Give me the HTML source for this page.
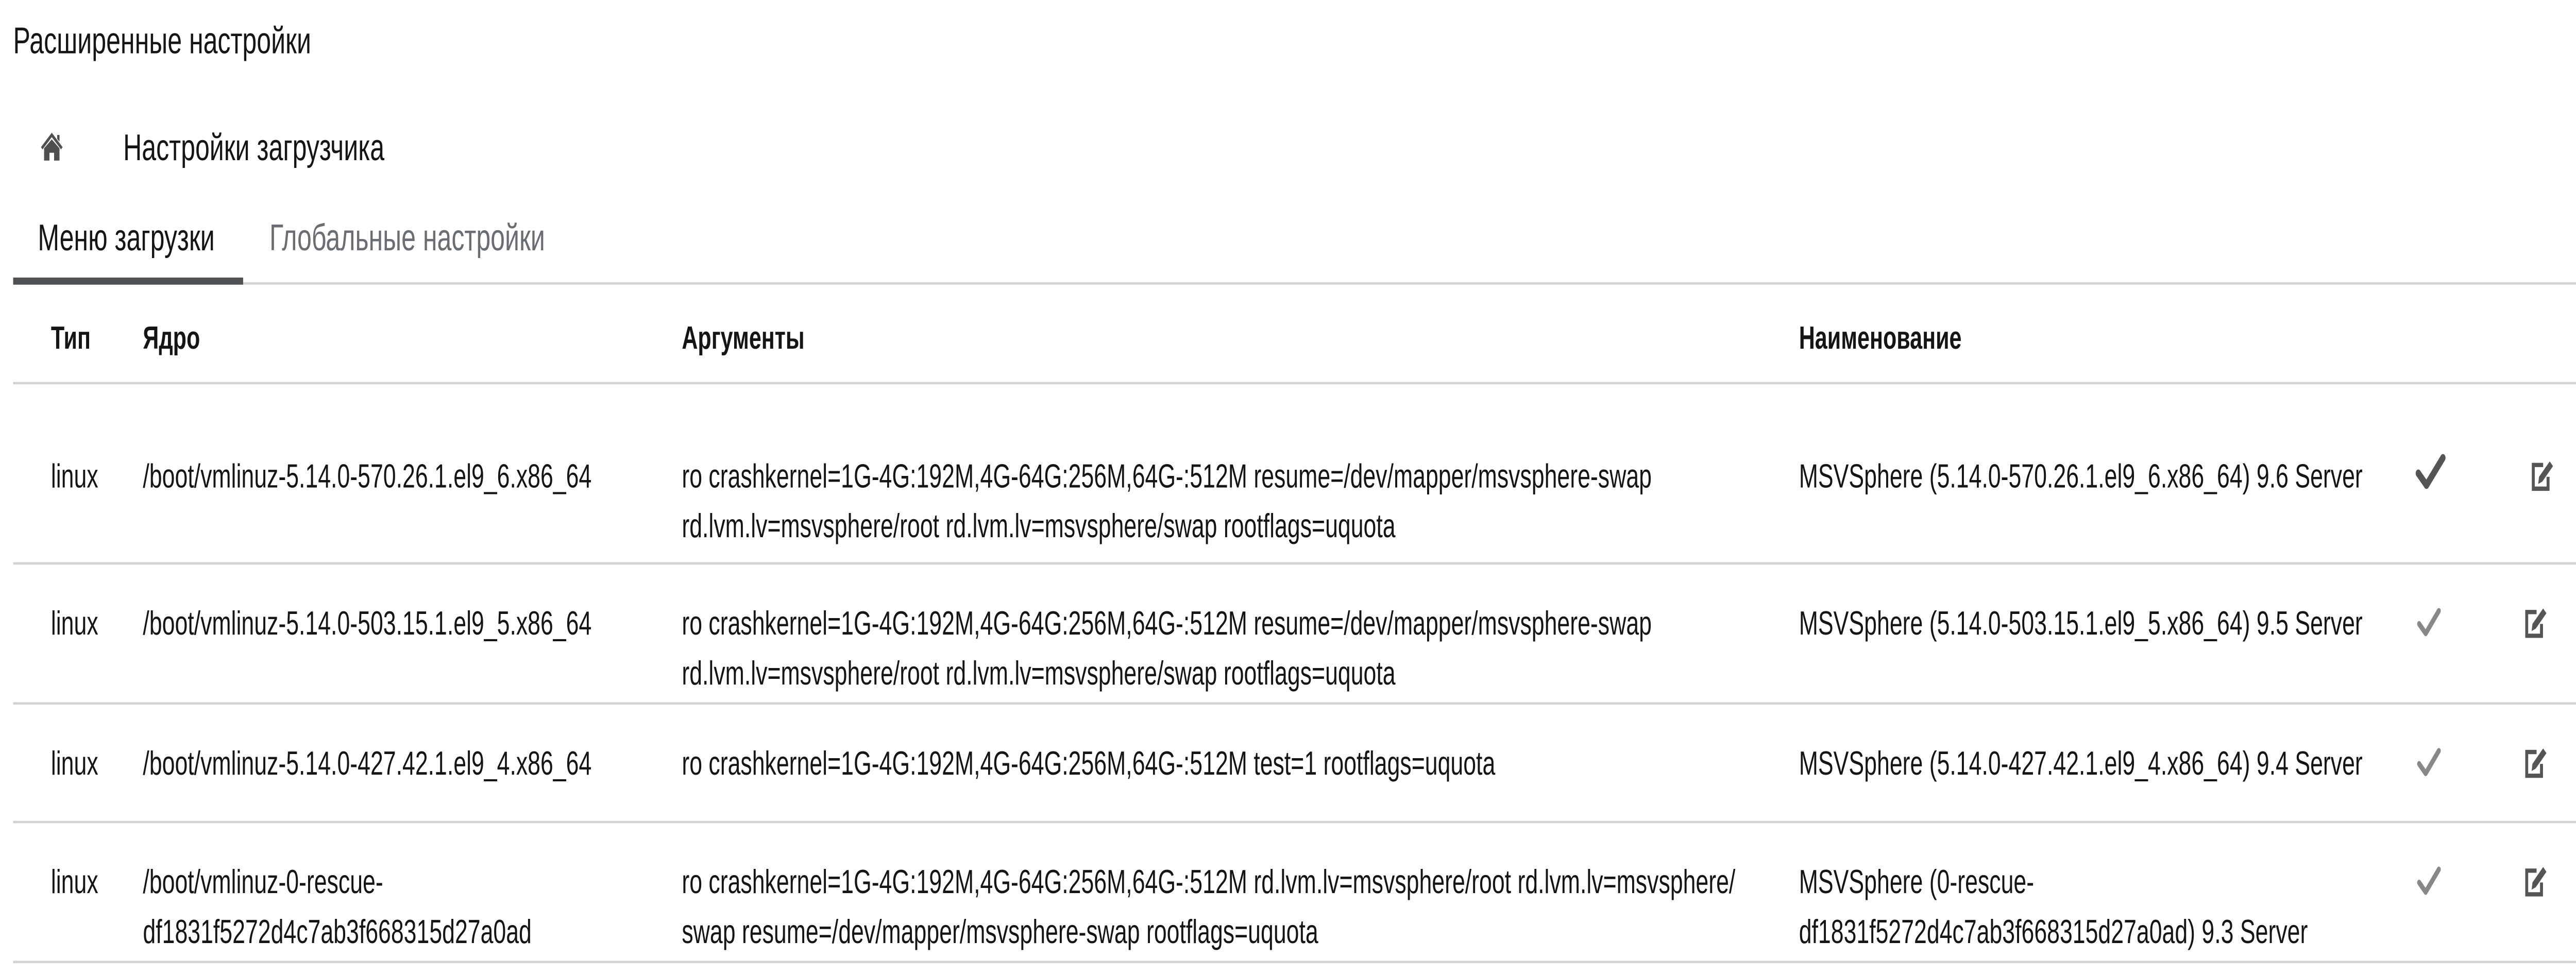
<!DOCTYPE html>
<html><head><meta charset="utf-8"><style>
html,body{margin:0;padding:0;background:#fff;width:100%;height:100%;overflow:hidden}
svg.m{position:absolute;left:0;top:0;width:100vw;height:100vh;display:block}
text{font-family:"Liberation Sans","DejaVu Sans",sans-serif;fill:#151515;white-space:pre}
.t{font-size:14px}.h{font-size:13.5px;font-weight:bold}.b{font-size:15.7px}
</style></head><body>
<svg class="m" viewBox="0 0 1568 411" preserveAspectRatio="none">
<text class="b" x="8" y="22.5">Расширенные настройки</text>
<path transform="translate(24,55) scale(0.94)" d="M8 1 L1 7.5 L2 8.5 L8 3 L14 8.5 L15 7.5 Z M3 8 L8 4 L13 8 V13.5 H9.5 V10 H6.5 V13.5 H3 Z M11.5 2 H13 V5 L11.5 3.8Z" fill="#4f4f4f"/>
<text class="b" x="75" y="67.5">Настройки загрузчика</text>
<text class="b" x="23" y="105.5">Меню загрузки</text>
<text class="b" x="164" y="105.5" style="fill:#6a6e73">Глобальные настройки</text>
<rect x="8" y="119" width="1560" height="1" fill="#d2d2d2"/>
<rect x="8" y="117" width="140" height="3" fill="#4f5255"/>
<text class="h" x="31" y="147">Тип</text>
<text class="h" x="87" y="147">Ядро</text>
<text class="h" x="415" y="147">Аргументы</text>
<text class="h" x="1095" y="147">Наименование</text>
<rect x="8" y="161" width="1560" height="1" fill="#d2d2d2"/>

<text class="t" x="31" y="205.5">linux</text>
<text class="t" x="87" y="205.5">/boot/vmlinuz-5.14.0-570.26.1.el9_6.x86_64</text>
<text class="t" x="415" y="205.5">ro crashkernel=1G-4G:192M,4G-64G:256M,64G-:512M resume=/dev/mapper/msvsphere-swap</text>
<text class="t" x="415" y="226.5">rd.lvm.lv=msvsphere/root rd.lvm.lv=msvsphere/swap rootflags=uquota</text>
<text class="t" x="1095" y="205.5">MSVSphere (5.14.0-570.26.1.el9_6.x86_64) 9.6 Server</text>
<rect x="8" y="237" width="1560" height="1" fill="#d2d2d2"/>

<text class="t" x="31" y="267.5">linux</text>
<text class="t" x="87" y="267.5">/boot/vmlinuz-5.14.0-503.15.1.el9_5.x86_64</text>
<text class="t" x="415" y="267.5">ro crashkernel=1G-4G:192M,4G-64G:256M,64G-:512M resume=/dev/mapper/msvsphere-swap</text>
<text class="t" x="415" y="288.5">rd.lvm.lv=msvsphere/root rd.lvm.lv=msvsphere/swap rootflags=uquota</text>
<text class="t" x="1095" y="267.5">MSVSphere (5.14.0-503.15.1.el9_5.x86_64) 9.5 Server</text>
<rect x="8" y="296" width="1560" height="1" fill="#d2d2d2"/>

<text class="t" x="31" y="326.5">linux</text>
<text class="t" x="87" y="326.5">/boot/vmlinuz-5.14.0-427.42.1.el9_4.x86_64</text>
<text class="t" x="415" y="326.5">ro crashkernel=1G-4G:192M,4G-64G:256M,64G-:512M test=1 rootflags=uquota</text>
<text class="t" x="1095" y="326.5">MSVSphere (5.14.0-427.42.1.el9_4.x86_64) 9.4 Server</text>
<rect x="8" y="346" width="1560" height="1" fill="#d2d2d2"/>

<text class="t" x="31" y="376.5">linux</text>
<text class="t" x="87" y="376.5">/boot/vmlinuz-0-rescue-</text>
<text class="t" x="87" y="397.5">df1831f5272d4c7ab3f668315d27a0ad</text>
<text class="t" x="415" y="376.5">ro crashkernel=1G-4G:192M,4G-64G:256M,64G-:512M rd.lvm.lv=msvsphere/root rd.lvm.lv=msvsphere/</text>
<text class="t" x="415" y="397.5">swap resume=/dev/mapper/msvsphere-swap rootflags=uquota</text>
<text class="t" x="1095" y="376.5">MSVSphere (0-rescue-</text>
<text class="t" x="1095" y="397.5">df1831f5272d4c7ab3f668315d27a0ad) 9.3 Server</text>
<rect x="8" y="405" width="1560" height="1" fill="#d2d2d2"/>

<path transform="translate(1470,191)" d="M2 8.5 L7 13.5 L17 2" stroke="#555" stroke-width="3.2" fill="none" stroke-linecap="round" stroke-linejoin="round"/>
<path transform="translate(1471,256)" d="M1.5 7 L5.5 11 L13.5 1.5" stroke="#888" stroke-width="2.4" fill="none" stroke-linecap="round" stroke-linejoin="round"/>
<path transform="translate(1471,315)" d="M1.5 7 L5.5 11 L13.5 1.5" stroke="#888" stroke-width="2.4" fill="none" stroke-linecap="round" stroke-linejoin="round"/>
<path transform="translate(1471,365)" d="M1.5 7 L5.5 11 L13.5 1.5" stroke="#888" stroke-width="2.4" fill="none" stroke-linecap="round" stroke-linejoin="round"/>

<g transform="translate(1540,193)"><path d="M8 3 H2 V13 H11 V8" stroke="#555" stroke-width="1.8" fill="none"/><path d="M5 11 L5.5 8 L12 1.5 L14 3.5 L7.5 10 Z" fill="#555"/></g>
<g transform="translate(1536,255)"><path d="M8 3 H2 V13 H11 V8" stroke="#555" stroke-width="1.8" fill="none"/><path d="M5 11 L5.5 8 L12 1.5 L14 3.5 L7.5 10 Z" fill="#555"/></g>
<g transform="translate(1536,314)"><path d="M8 3 H2 V13 H11 V8" stroke="#555" stroke-width="1.8" fill="none"/><path d="M5 11 L5.5 8 L12 1.5 L14 3.5 L7.5 10 Z" fill="#555"/></g>
<g transform="translate(1536,364)"><path d="M8 3 H2 V13 H11 V8" stroke="#555" stroke-width="1.8" fill="none"/><path d="M5 11 L5.5 8 L12 1.5 L14 3.5 L7.5 10 Z" fill="#555"/></g>
</svg>
</body></html>
